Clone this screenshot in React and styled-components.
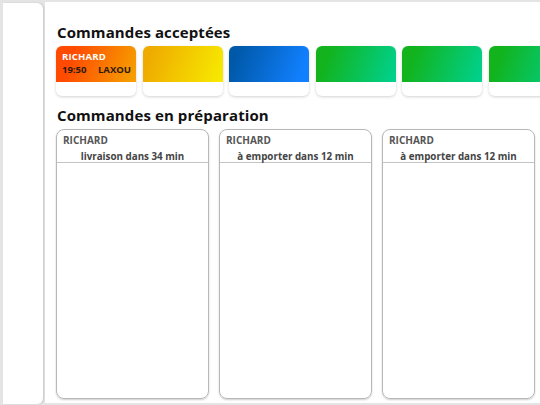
import React from "react";
import styled, { createGlobalStyle } from "styled-components";

const GlobalStyle = createGlobalStyle`
  html, body {
    margin: 0;
    padding: 0;
    background: #e4e4e4;
    font-family: "Open Sans", "Liberation Sans", sans-serif;
  }
`;

const Page = styled.div`
  display: flex;
  width: 540px;
  height: 405px;
  padding-top: 2px;
  box-sizing: border-box;
  overflow: hidden;
`;

const Sidebar = styled.div`
  width: 40px;
  height: 401px;
  margin: 1px 2px 0 3px;
  background: #fff;
  border-radius: 0 6px 6px 0;
  box-shadow: 1px 0 2px rgba(0, 0, 0, 0.12);
  flex-shrink: 0;
`;

const Main = styled.div`
  flex: 1;
  height: 401px;
  background: #fff;
  padding: 20px 0 0 11px;
  box-sizing: border-box;
  display: flex;
  flex-direction: column;
  overflow: hidden;
`;

const SectionTitle = styled.h2`
  margin: 0 0 4px 1px;
  font-size: 15px;
  font-weight: 700;
  color: #111;
  line-height: 20px;
  letter-spacing: 0.1px;
`;

const AcceptedRow = styled.div`
  display: flex;
  gap: 6.5px;
  margin-bottom: 9px;
`;

const OrderCard = styled.div`
  width: 80px;
  height: 50px;
  flex-shrink: 0;
  border-radius: 6px;
  background: #fff;
  box-shadow: 0 1px 3px rgba(0, 0, 0, 0.18);
  overflow: hidden;
  display: flex;
  flex-direction: column;
`;

const CardHead = styled.div`
  height: 36px;
  background: linear-gradient(${(p) => p.$from}, ${(p) => p.$to});
  padding: 4px 5px 0 6px;
  box-sizing: border-box;
  font-size: 9.5px;
  font-weight: 700;
  line-height: 13px;
`;

const Client = styled.div`
  color: #fff;
  letter-spacing: 0.2px;
`;

const CardInfo = styled.div`
  display: flex;
  justify-content: space-between;
  color: #2a1a10;
`;

const PrepRow = styled.div`
  display: flex;
  gap: 10px;
`;

const PrepCard = styled.div`
  width: 153px;
  height: 270px;
  flex-shrink: 0;
  border: 1px solid #b8b8b8;
  border-radius: 8px;
  box-shadow: 0 1px 2px rgba(0, 0, 0, 0.2);
  box-sizing: border-box;
  display: flex;
  flex-direction: column;
`;

const PrepHead = styled.div`
  border-bottom: 1px solid #c4c4c4;
  padding: 3px 6px 0;
  height: 33px;
  box-sizing: border-box;
  font-weight: 700;
`;

const PrepClient = styled.div`
  font-size: 10px;
  color: #555;
  line-height: 14px;
`;

const PrepMode = styled.div`
  font-size: 9.8px;
  color: #444;
  text-align: center;
  line-height: 13px;
  margin-top: 3px;
`;

const accepted = [
  { from: "110deg, #ff4a00 20%", to: "#f5a300 100%", name: "RICHARD", time: "19:50", city: "LAXOU" },
  { from: "110deg, #efab00 10%", to: "#f7ec00 100%" },
  { from: "110deg, #0058a8 10%", to: "#1180ff 90%" },
  { from: "110deg, #12b31c 15%", to: "#00d291 100%" },
  { from: "110deg, #12b31c 15%", to: "#00d291 100%" },
  { from: "110deg, #12b31c 15%", to: "#00d291 100%" },
];

const preparing = [
  { name: "RICHARD", mode: "livraison dans 34 min" },
  { name: "RICHARD", mode: "à emporter dans 12 min" },
  { name: "RICHARD", mode: "à emporter dans 12 min" },
];

export default function App() {
  return (
    <>
      <GlobalStyle />
      <Page>
        <Sidebar />
        <Main>
          <SectionTitle>Commandes acceptées</SectionTitle>
          <AcceptedRow>
            {accepted.map((o, i) => (
              <OrderCard key={i}>
                <CardHead $from={o.from} $to={o.to}>
                  {o.name && <Client>{o.name}</Client>}
                  {o.time && (
                    <CardInfo>
                      <span>{o.time}</span>
                      <span>{o.city}</span>
                    </CardInfo>
                  )}
                </CardHead>
              </OrderCard>
            ))}
          </AcceptedRow>
          <SectionTitle>Commandes en préparation</SectionTitle>
          <PrepRow>
            {preparing.map((o, i) => (
              <PrepCard key={i}>
                <PrepHead>
                  <PrepClient>{o.name}</PrepClient>
                  <PrepMode>{o.mode}</PrepMode>
                </PrepHead>
              </PrepCard>
            ))}
          </PrepRow>
        </Main>
      </Page>
    </>
  );
}
